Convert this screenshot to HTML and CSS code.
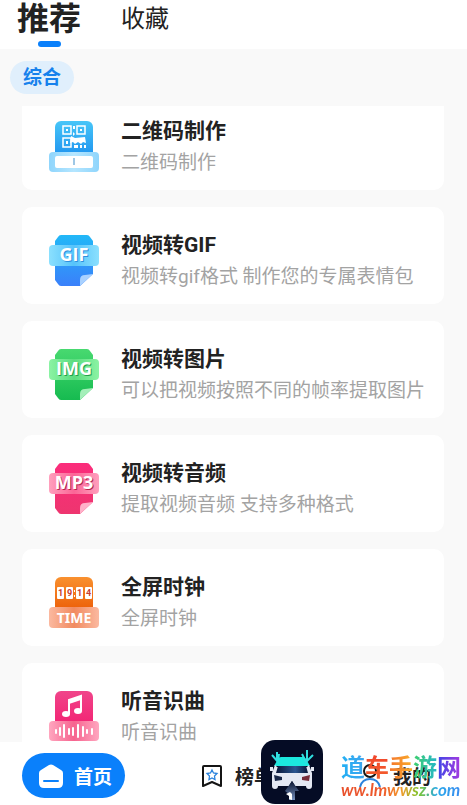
FILE: index.html
```html
<!DOCTYPE html>
<html lang="zh-CN">
<head>
    <meta charset="UTF-8">
    <meta name="viewport" content="width=device-width, initial-scale=1.0">
    <title>推荐</title>
    <link rel="stylesheet" href="styles.css">
</head>
<body>
    <header class="tabs">
        <a class="tab active" href="#recommend">推荐</a>
        <a class="tab" href="#favorites">收藏</a>
    </header>

    <div class="filters">
        <button class="chip" type="button">综合</button>
    </div>

    <main class="list">
        <a class="card" href="#qrcode">
            <svg class="card-icon" viewBox="0 0 50 54" aria-hidden="true">
                <defs>
                    <linearGradient id="qr" x1="0" y1="0" x2="0" y2="1"><stop offset="0" stop-color="#48c6f8"/><stop offset="1" stop-color="#1b8fee"/></linearGradient>
                    <linearGradient id="qrBand"><stop offset="0" stop-color="#8fd5fc"/><stop offset=".5" stop-color="#b5e6ff"/><stop offset="1" stop-color="#8fd5fc"/></linearGradient>
                </defs>
                <rect x="6" y="1" width="38" height="38" rx="6" fill="url(#qr)"/>
                <g fill="none" stroke="#fff" stroke-width="1.5">
                    <path d="M14 6h8v8h-8zM28 6h8v8h-8zM14 18h8v9h-8z"/>
                </g>
                <path fill="#fff" d="M17 9h2v2h-2zM31 9h2v2h-2zM17 21h2v3h-2zM24 6h2v3h-2zM24 12l2 2-2 2zM22 16l4 2 10-1 1 6-3-1-2 2-3-2-3 2-2-2-3 1zM25 25h4v3h-4zM31 25h2v3h-2zM35 25h2v3h-2z"/>
                <rect x="0" y="32" width="50" height="20" rx="4" fill="url(#qrBand)"/>
                <rect x="6" y="36" width="38" height="12" rx="2" fill="#fff"/>
                <path d="M25 38v7" stroke="#7eb5dc" stroke-width="1.5"/>
            </svg>
            <div class="card-text">
                <h2>二维码制作</h2>
                <p>二维码制作</p>
            </div>
        </a>

        <a class="card" href="#gif">
            <svg class="card-icon" viewBox="0 0 50 54" aria-hidden="true">
                <defs>
                    <linearGradient id="gif" x1="0" y1="0" x2="0" y2="1"><stop offset="0" stop-color="#22b8f7"/><stop offset="1" stop-color="#3a80fa"/></linearGradient>
                    <linearGradient id="gifBand"><stop offset="0" stop-color="#8be0fe"/><stop offset=".5" stop-color="#55c3fb"/><stop offset="1" stop-color="#8be0fe"/></linearGradient>
                </defs>
                <path d="M12 1h26q2 0 3 2l3 4v33L31 52H12q-2 0-3-2l-3-4V7l3-4q1-2 3-2z" fill="url(#gif)"/>
                <path d="M31 52V46q0-5 5-5l8-1z" fill="#a9d1ff"/>
                <rect x="0" y="11" width="50" height="21" rx="4" fill="url(#gifBand)"/>
                <text class="icon-label gif-shade" x="26" y="28">GIF</text>
                <text class="icon-label" x="25" y="27">GIF</text>
            </svg>
            <div class="card-text">
                <h2>视频转GIF</h2>
                <p>视频转gif格式 制作您的专属表情包</p>
            </div>
        </a>

        <a class="card" href="#image">
            <svg class="card-icon" viewBox="0 0 50 54" aria-hidden="true">
                <defs>
                    <linearGradient id="img" x1="0" y1="0" x2="0" y2="1"><stop offset="0" stop-color="#48d970"/><stop offset="1" stop-color="#16bb50"/></linearGradient>
                    <linearGradient id="imgBand"><stop offset="0" stop-color="#8bf3a4"/><stop offset=".5" stop-color="#5bdc7f"/><stop offset="1" stop-color="#8bf3a4"/></linearGradient>
                </defs>
                <path d="M12 1h26q2 0 3 2l3 4v33L31 52H12q-2 0-3-2l-3-4V7l3-4q1-2 3-2z" fill="url(#img)"/>
                <path d="M31 52V46q0-5 5-5l8-1z" fill="#a4efb9"/>
                <rect x="0" y="11" width="50" height="21" rx="4" fill="url(#imgBand)"/>
                <text class="icon-label img-shade" x="26" y="28">IMG</text>
                <text class="icon-label" x="25" y="27">IMG</text>
            </svg>
            <div class="card-text">
                <h2>视频转图片</h2>
                <p>可以把视频按照不同的帧率提取图片</p>
            </div>
        </a>

        <a class="card" href="#audio">
            <svg class="card-icon" viewBox="0 0 50 54" aria-hidden="true">
                <defs>
                    <linearGradient id="mp3" x1="0" y1="0" x2="0" y2="1"><stop offset="0" stop-color="#fb2c7b"/><stop offset="1" stop-color="#ee356f"/></linearGradient>
                    <linearGradient id="mp3Band"><stop offset="0" stop-color="#ff9fbd"/><stop offset=".5" stop-color="#fb6596"/><stop offset="1" stop-color="#ff9fbd"/></linearGradient>
                </defs>
                <path d="M12 1h26q2 0 3 2l3 4v33L31 52H12q-2 0-3-2l-3-4V7l3-4q1-2 3-2z" fill="url(#mp3)"/>
                <path d="M31 52V46q0-5 5-5l8-1z" fill="#ffb1c9"/>
                <rect x="0" y="11" width="50" height="21" rx="4" fill="url(#mp3Band)"/>
                <text class="icon-label mp3-shade" x="26" y="28">MP3</text>
                <text class="icon-label" x="25" y="27">MP3</text>
            </svg>
            <div class="card-text">
                <h2>视频转音频</h2>
                <p>提取视频音频 支持多种格式</p>
            </div>
        </a>

        <a class="card" href="#clock">
            <svg class="card-icon" viewBox="0 0 50 54" aria-hidden="true">
                <defs>
                    <linearGradient id="clk" x1="0" y1="0" x2="0" y2="1"><stop offset="0" stop-color="#f9912f"/><stop offset="1" stop-color="#ea5803"/></linearGradient>
                    <linearGradient id="clkBand"><stop offset="0" stop-color="#fbb9a0"/><stop offset=".5" stop-color="#f18b60"/><stop offset="1" stop-color="#fbb9a0"/></linearGradient>
                </defs>
                <rect x="6" y="1" width="38" height="38" rx="6" fill="url(#clk)"/>
                <g fill="#fff">
                    <rect x="8" y="11" width="7" height="12" rx="1"/>
                    <rect x="17" y="11" width="7" height="12" rx="1"/>
                    <rect x="27" y="11" width="7" height="12" rx="1"/>
                    <rect x="36" y="11" width="7" height="12" rx="1"/>
                    <path d="M25 14h1v2h-1zM25 19h1v2h-1z"/>
                </g>
                <g class="digits">
                    <text x="11.5" y="20">1</text>
                    <text x="20.5" y="20">9</text>
                    <text x="30.5" y="20">1</text>
                    <text x="39.5" y="20">4</text>
                </g>
                <rect x="0" y="31" width="50" height="21" rx="4" fill="url(#clkBand)"/>
                <text class="icon-label narrow" x="25" y="47">TIME</text>
            </svg>
            <div class="card-text">
                <h2>全屏时钟</h2>
                <p>全屏时钟</p>
            </div>
        </a>

        <a class="card" href="#music">
            <svg class="card-icon" viewBox="0 0 50 54" aria-hidden="true">
                <defs>
                    <linearGradient id="mus" x1="0" y1="0" x2="0" y2="1"><stop offset="0" stop-color="#f0458a"/><stop offset="1" stop-color="#f31f70"/></linearGradient>
                    <linearGradient id="musBand"><stop offset="0" stop-color="#ffa6bf"/><stop offset=".5" stop-color="#f6648f"/><stop offset="1" stop-color="#ffa6bf"/></linearGradient>
                </defs>
                <rect x="6" y="1" width="38" height="38" rx="6" fill="url(#mus)"/>
                <path d="M20 24V10l12-4v15" fill="none" stroke="#fff" stroke-width="2"/>
                <path d="M20 10l12-4v4l-12 4z" fill="#fff"/>
                <ellipse cx="17" cy="24" rx="4" ry="3" fill="#fff"/>
                <ellipse cx="29" cy="21" rx="4" ry="3" fill="#fff"/>
                <rect x="0" y="31" width="50" height="20" rx="4" fill="url(#musBand)"/>
                <path d="M7 40v3M11 38v7M15 35v12M20 39v5M24 38v7M29 35v12M34 37v9M38 40v3M43 39v5" stroke="#fff" stroke-width="2" stroke-linecap="round"/>
            </svg>
            <div class="card-text">
                <h2>听音识曲</h2>
                <p>听音识曲</p>
            </div>
        </a>
    </main>

    <nav class="bottom-nav">
        <a class="nav-item active" href="#home">
            <svg class="home-icon" viewBox="0 0 26 26" aria-hidden="true">
                <path d="M11 2q2-1 4 0l8 5q2 1 2 3v10q0 5-5 5H6q-5 0-5-5V10q0-2 2-3z" fill="#fff"/>
                <path d="M6 18h14" stroke="#0a80fb" stroke-width="2" stroke-linecap="round"/>
            </svg>
            <span>首页</span>
        </a>
        <a class="nav-item" href="#rank">
            <svg class="nav-icon" viewBox="0 0 22 24" aria-hidden="true">
                <path d="M2 3q0-1 1-1h16q1 0 1 1v19l-9-4-9 4z" fill="none" stroke="#151515" stroke-width="2" stroke-linejoin="round"/>
                <path d="M11 6l1.5 3 3.5.5-2.5 2.5.5 3.5-3-1.5-3 1.5.5-3.5L6 9.500 9.500 9z" fill="none" stroke="#2b83dd" stroke-width="1.3"/>
            </svg>
            <span>榜单</span>
        </a>
        <a class="nav-item" href="#mine">
            <svg class="nav-icon" viewBox="0 0 22 24" aria-hidden="true">
                <circle cx="11" cy="7" r="6" fill="none" stroke="#151515" stroke-width="2"/>
                <path d="M1 23q2-8 10-8t10 8" fill="none" stroke="#2b83dd" stroke-width="2"/>
            </svg>
            <span>我的</span>
        </a>
    </nav>

    <div class="watermark">
        <svg class="app-logo" viewBox="0 0 62 64" aria-hidden="true">
            <defs>
                <linearGradient id="beam" x1="0" y1="0" x2="0" y2="1"><stop offset="0" stop-color="#081330"/><stop offset="1" stop-color="#7690bd"/></linearGradient>
                <linearGradient id="glass"><stop offset="0" stop-color="#0a1638"/><stop offset=".6" stop-color="#2a5590"/><stop offset="1" stop-color="#0a1638"/></linearGradient>
            </defs>
            <rect width="62" height="64" rx="14" fill="#050c25"/>
            <path d="M20 17h22q2 0 3 2l4 7H13l4-7q1-2 3-2z" fill="#1ce8df"/>
            <path d="M14 25l-3 8v13q0 3 3 3t3-3h11l3-5 3 5h11q0 3 3 3t3-3V33l-3-8-2 2H16z" fill="#e4e8f3"/>
            <path d="M17 26h28l2 7H15z" fill="url(#glass)"/>
            <path d="M9 27h3v4H9zM50 27h3v4h-3z" fill="#e4e8f3"/>
            <path d="M13 35l8 2v3l-7 1z" fill="#192748"/>
            <path d="M49 35l-8 2v3l7 1z" fill="#782c3a"/>
            <path d="M31 41l7 10h-4v9h-6v-6l-4-3z" fill="url(#beam)"/>
            <path d="M25 54l4-2 2 2v6l-3-1v-3z" fill="#fff"/>
            <path d="M11 15l6 7 1-8M16 12v8M41 14l4 8 7-7M46 10v10" fill="none" stroke="#30dfe0" stroke-width="2"/>
        </svg>
        <div class="site">
            <div class="site-name"><span class="sky">道</span><span class="red">车</span><span class="orange">手</span><span class="green">游</span><span class="violet">网</span></div>
            <div class="site-url">ww.lmwwsz.com</div>
        </div>
    </div>
</body>
</html>
```
FILE: styles.css
```css
:root {
    --blue: #0a80fb;
    --page: #f9f9f9;
    --text: #222;
    --muted: #a3a3a3;
}

* {
    margin: 0;
    padding: 0;
    box-sizing: border-box;
}

body {
    height: 100vh;
    display: flex;
    flex-direction: column;
    position: relative;
    overflow: hidden;
    background: var(--page);
    color: var(--text);
    font-family: Roboto, "Noto Sans CJK SC", sans-serif;
}

a {
    color: inherit;
    text-decoration: none;
}

.tabs {
    display: flex;
    gap: 40px;
    height: 49px;
    padding-left: 17px;
    background: #fff;
    font-size: 24px;
    line-height: 38px;
}

.tab.active {
    display: flex;
    flex-direction: column;
    align-items: center;
    font-size: 32px;
    font-weight: bold;
}

.tab.active::after {
    content: "";
    width: 23px;
    height: 6px;
    margin-top: 3px;
    border-radius: 3px;
    background: var(--blue);
}

.filters {
    padding: 12px 10px;
}

.chip {
    display: block;
    height: 33px;
    padding: 0 13px;
    border: 0;
    border-radius: 17px;
    background: #e0effc;
    color: #1681ec;
    font: bold 19px/33px Roboto, "Noto Sans CJK SC", sans-serif;
}

.list {
    flex: 1;
    min-height: 0;
    overflow: hidden;
    padding: 0 23px 0 22px;
}

.card {
    display: flex;
    align-items: center;
    gap: 22px;
    height: 97px;
    margin-bottom: 17px;
    padding: 10px 27px 0;
    border-radius: 10px;
    background: #fff;
}

/* the list is scrolled a little past the first card's top edge */
.card:first-child {
    margin-top: -13px;
}

.card-icon {
    flex: none;
    width: 50px;
    height: 54px;
}

.card-text {
    white-space: nowrap;
}

.card h2 {
    font-size: 21px;
    line-height: 32px;
    font-weight: bold;
}

.card p {
    color: var(--muted);
    font-size: 19px;
    line-height: 32px;
}

.icon-label {
    fill: #fff;
    font: bold 18px "Open Sans", sans-serif;
    text-anchor: middle;
}

.gif-shade { fill: #2f8fdc; }
.img-shade { fill: #22a04b; }
.mp3-shade { fill: #b5244f; }

.icon-label.narrow {
    font: bold 14px "Noto Sans", sans-serif;
}

.digits {
    fill: #c63c32;
    font: bold 9px Roboto, sans-serif;
    text-anchor: middle;
}

.bottom-nav {
    display: flex;
    align-items: center;
    gap: 76px;
    height: 63px;
    padding: 4px 36px 0 22px;
    background: #fff;
}

.nav-item {
    display: flex;
    align-items: center;
    gap: 12px;
    font-size: 19px;
    font-weight: bold;
}

.nav-item:last-child {
    margin-left: auto;
}

.nav-item.active {
    height: 45px;
    padding: 0 13px 0 16px;
    gap: 10px;
    border-radius: 23px;
    background: var(--blue);
    color: #fff;
}

.home-icon {
    width: 26px;
    height: 26px;
}

.nav-icon {
    width: 22px;
    height: 24px;
}

.watermark {
    position: absolute;
    right: 6px;
    bottom: 1px;
    display: flex;
    align-items: center;
    gap: 18px;
}

.app-logo {
    width: 62px;
    height: 64px;
}

.site {
    padding-top: 8px;
}

.site-name {
    font: bold 24px/28px "Noto Sans CJK SC", sans-serif;
}

.site-name span,
.site-url {
    background-clip: text;
    color: transparent;
}

.sky { background-image: linear-gradient(90deg, #22b0f4, #3fa4ee); }
.red { background-image: linear-gradient(#f0402c, #f4622c); }
.orange { background-image: linear-gradient(90deg, #f4742c, #f9ae2b); }
.green { background-image: linear-gradient(90deg, #3fd06a, #25b5c8); }
.violet { background-image: linear-gradient(90deg, #3b46e6, #a83be0); }

.site-url {
    background-image: linear-gradient(90deg, #e8502c, #ee5a2c 35%, #f39a2a 50%, #7cc62f 65%, #29a9ea 80%, #3a8cf0);
    font: italic bold 17px/20px Lato, sans-serif;
}
```
